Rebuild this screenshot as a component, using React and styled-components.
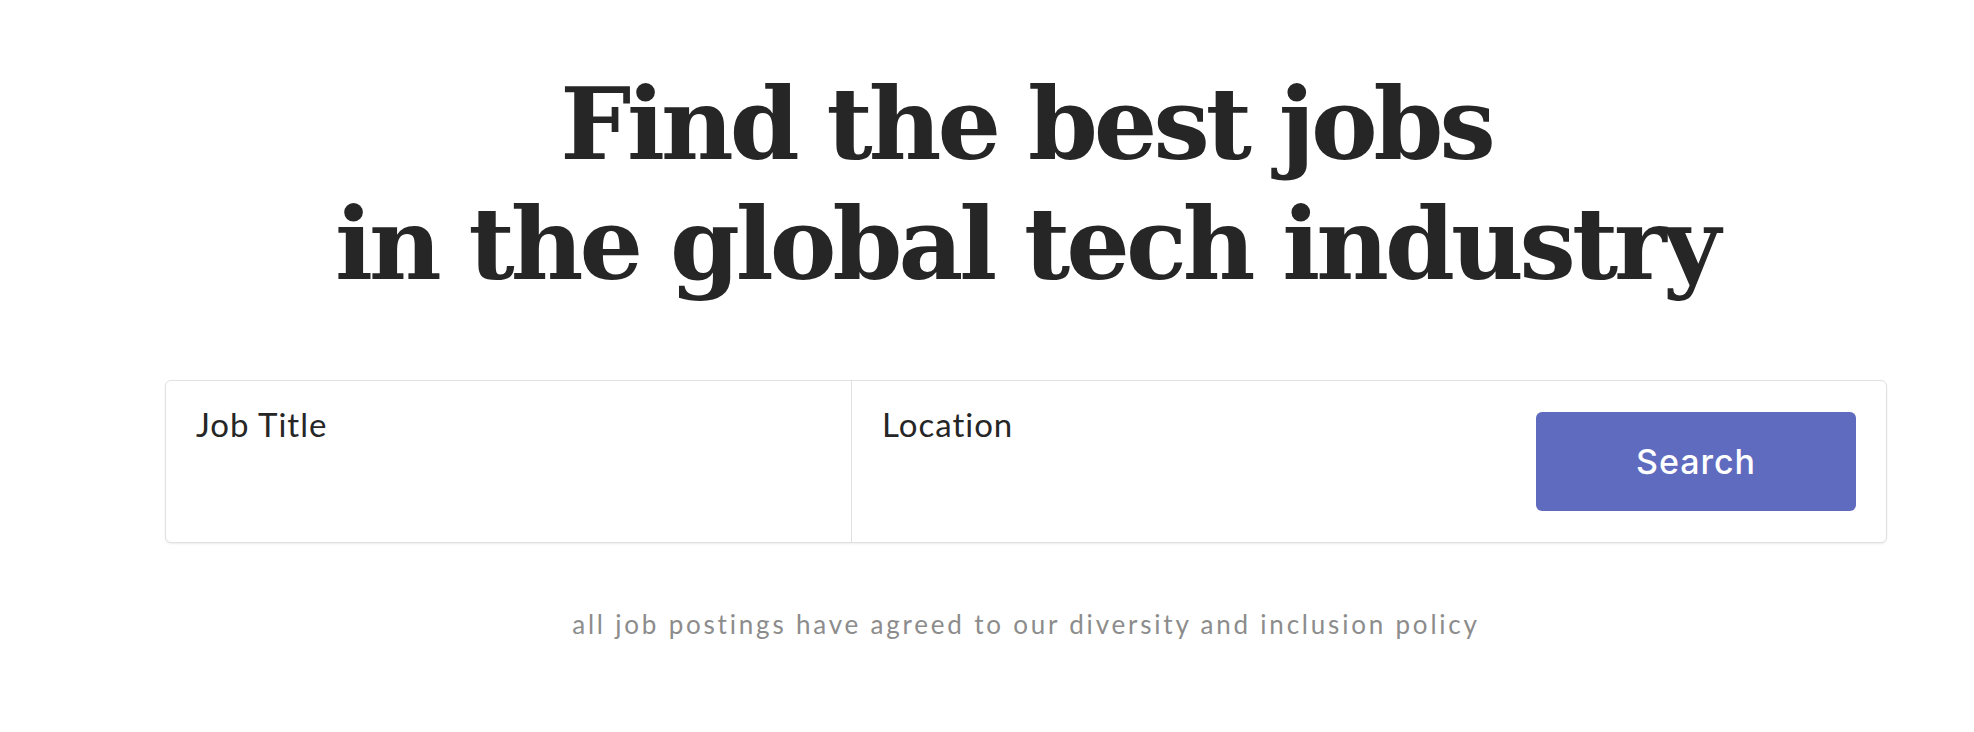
import React from 'react'
import styled, { createGlobalStyle } from 'styled-components'

const GlobalStyle = createGlobalStyle`
  body {
    margin: 0;
    background: #ffffff;
    font-family: Lato, "Noto Sans", sans-serif;
  }
`

const App = () => {
  return (
    <>
      <GlobalStyle />
      <Page>
        <Hero>
          <Title>
            Find the best jobs
            <br />
            in the global tech industry
          </Title>
          <SearchCard>
            <Field>
              <FieldLabel>Job Title</FieldLabel>
            </Field>
            <Field $last>
              <FieldLabel>Location</FieldLabel>
              <SearchButton>Search</SearchButton>
            </Field>
          </SearchCard>
          <Note>all job postings have agreed to our diversity and inclusion policy</Note>
        </Hero>
      </Page>
    </>
  )
}

export default App

const Page = styled.div`
  padding: 0 87px 0 165px;
  min-height: 732px;
  box-sizing: border-box;
`

const Hero = styled.section`
  display: flex;
  flex-direction: column;
  align-items: center;
  padding-top: 64px;
`

const Title = styled.h1`
  margin: 0;
  font-family: "DejaVu Serif", "Liberation Serif", serif;
  font-weight: 700;
  font-size: 100px;
  line-height: 120px;
  letter-spacing: -4px;
  color: #262626;
  text-align: center;
  white-space: nowrap;
`

const SearchCard = styled.div`
  display: flex;
  width: 100%;
  height: 163px;
  margin-top: 76px;
  box-sizing: border-box;
  border: 1px solid #e1e1e4;
  border-radius: 6px;
  box-shadow: 0 1px 2px rgba(0, 0, 0, 0.08);
  background: #fff;
`

const Field = styled.div`
  display: flex;
  justify-content: space-between;
  align-items: flex-start;
  flex: ${(p) => (p.$last ? '1' : '0 0 686px')};
  padding: 23px 30px 0 30px;
  box-sizing: border-box;
  border-right: ${(p) => (p.$last ? 'none' : '1px solid #e1e1e4')};
`

const FieldLabel = styled.span`
  font-size: 33px;
  line-height: 40px;
  letter-spacing: 1px;
  color: #262626;
`

const SearchButton = styled.button`
  width: 320px;
  height: 99px;
  margin-top: 8px;
  border: none;
  border-radius: 6px;
  background: #5f6bbf;
  color: #ffffff;
  font-family: Inter, "Liberation Sans", sans-serif;
  font-size: 34px;
  font-weight: 500;
  letter-spacing: 1px;
  cursor: pointer;
`

const Note = styled.p`
  margin: 66px 0 0;
  font-size: 26px;
  line-height: 30px;
  letter-spacing: 2.8px;
  color: #8c8c8c;
`
